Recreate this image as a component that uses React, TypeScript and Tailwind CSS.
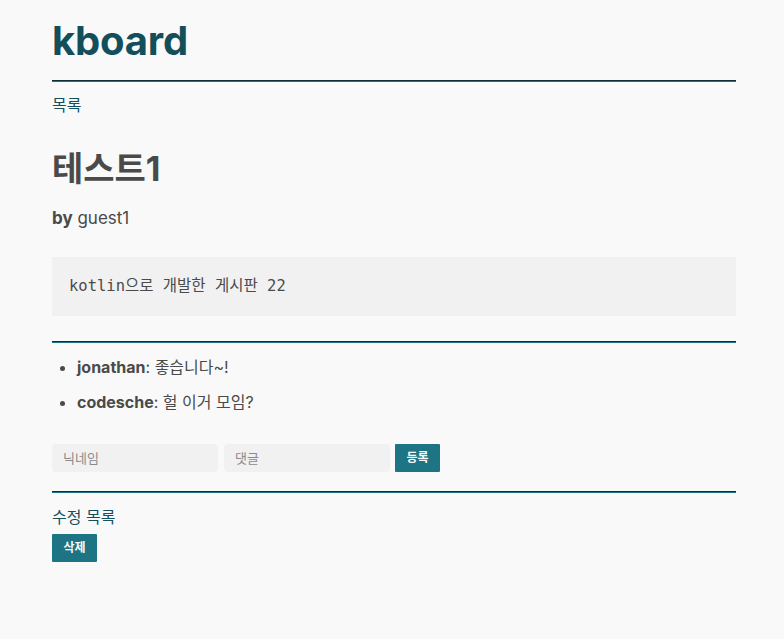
import React from "react";

const sans = "font-['Inter','Noto_Sans_CJK_KR',sans-serif]";

function Rule() {
  return <div className="h-0 border-t border-b border-t-[#0b2e38] border-b-[#1d7484]" />;
}

export default function App() {
  return (
    <div className={`min-h-[639px] bg-[#f9f9f9] text-[#4a4a4a] ${sans}`}>
      <div className="ml-[52px] w-[684px] pt-[18px]">
        <h1 className="text-[40px] leading-[46px] font-bold text-[#124f5a] tracking-[-0.2px]">kboard</h1>
        <div className="mt-[16px]">
          <Rule />
        </div>
        <div className="mt-[12px] text-[16px] leading-[22px] text-[#13505c]">목록</div>

        <h2 className="mt-[33px] text-[34px] leading-[40px] font-bold text-[#4a4a4a]">테스트1</h2>
        <div className="mt-[17px] text-[17px] leading-[24px]">
          <span className="font-bold">by</span> guest1
        </div>

        <div className="mt-[27px] bg-[#f1f1f1] h-[59px] flex items-center px-[17px]">
          <span className="font-['DejaVu_Sans_Mono','Noto_Sans_CJK_KR',monospace] text-[15.5px] text-[#4a4a4a]">
            kotlin으로 개발한 게시판 22
          </span>
        </div>

        <div className="mt-[25px]">
          <Rule />
        </div>

        <ul className="mt-[12px] list-disc pl-[25px] text-[16px] leading-[24px]">
          <li className="mb-[11px]">
            <span className="font-bold">jonathan</span>: 좋습니다~!
          </li>
          <li>
            <span className="font-bold">codesche</span>: 헐 이거 모임?
          </li>
        </ul>

        <div className="mt-[30px] flex items-center gap-[6px]">
          <input
            placeholder="닉네임"
            className="w-[166px] h-[28px] rounded-[4px] bg-[#f1f1f1] px-[11px] text-[13px] placeholder:text-[#8a8a8a] outline-none"
          />
          <input
            placeholder="댓글"
            className="w-[166px] h-[28px] rounded-[4px] bg-[#f1f1f1] px-[11px] text-[13px] placeholder:text-[#8a8a8a] outline-none"
          />
          <button className="ml-[-1px] w-[45px] h-[28px] rounded-[1px] bg-[#1d7484] text-[#f9f9f9] text-[12px] font-bold">
            등록
          </button>
        </div>

        <div className="mt-[19px]">
          <Rule />
        </div>

        <div className="mt-[13px] text-[16px] leading-[22px] text-[#13505c]">수정 목록</div>
        <button className="mt-[6px] w-[45px] h-[28px] rounded-[1px] bg-[#1d7484] text-[#f9f9f9] text-[12px] font-bold">
          삭제
        </button>
      </div>
    </div>
  );
}
